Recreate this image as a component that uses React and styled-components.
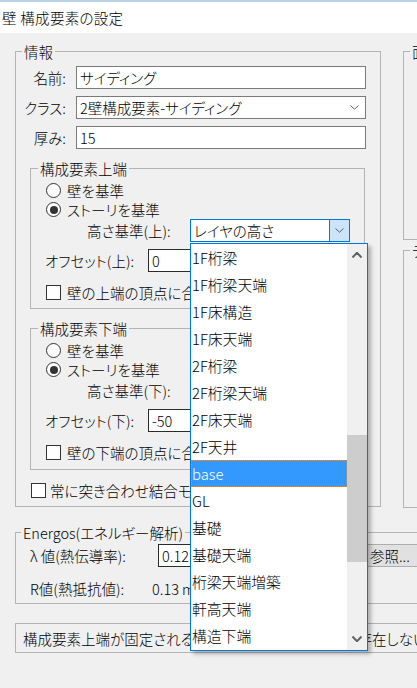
import React from 'react';
import styled, { createGlobalStyle } from 'styled-components';

const GlobalStyle = createGlobalStyle`
  html, body {
    margin: 0;
    padding: 0;
    background: #f0f0f0;
  }
  body {
    font-family: "Noto Sans CJK JP", "Noto Sans", sans-serif;
    font-size: 14.5px;
    font-weight: 300;
    color: #000;
    font-feature-settings: "palt";
  }
  * {
    box-sizing: border-box;
  }
`;

const Window = styled.div`
  position: relative;
  width: 417px;
  height: 688px;
  overflow: hidden;
  background: #f0f0f0;
`;

const TitleStrip = styled.div`
  height: 2px;
  background: #b9d2e8;
`;

const TitleBar = styled.div`
  height: 31px;
  background: #fff;
  display: flex;
  align-items: center;
  padding-left: 2px;
  font-size: 14.5px;
  letter-spacing: 0.3px;
  white-space: pre;
`;

const Body = styled.div`
  width: 640px;
  padding: 18px 0 0 15px;
  display: flex;
  flex-direction: column;
`;

const TopRow = styled.div`
  display: flex;
  gap: 22px;
  align-items: flex-start;
`;

const Group = styled.div`
  position: relative;
  flex-shrink: 0;
  border: 1px solid #b4b4b4;
  width: ${p => p.$w}px;
  height: ${p => p.$h}px;
  margin-top: ${p => p.$mt || 0}px;
  margin-left: ${p => p.$ml || 0}px;
  padding-top: ${p => p.$pt || 0}px;
`;

const Legend = styled.span`
  position: absolute;
  top: -9px;
  left: ${p => p.$left}px;
  padding: 0 2px;
  line-height: 17px;
  background: #f0f0f0;
  white-space: nowrap;
`;

const FieldGrid = styled.div`
  display: grid;
  grid-template-columns: 50px 290px;
  column-gap: 10px;
  row-gap: 7px;
  align-items: center;
`;

const FieldLabel = styled.span`
  justify-self: end;
  white-space: nowrap;
`;

const TextBox = styled.div`
  height: 23px;
  width: ${p => (p.$w ? `${p.$w}px` : 'auto')};
  border: 1px solid ${p => (p.$dark ? '#2b2b2b' : '#7a7a7a')};
  background: #fff;
  display: flex;
  align-items: center;
  padding-left: 3px;
  white-space: nowrap;
  overflow: hidden;
`;

const SelectBox = styled(TextBox)`
  justify-content: space-between;
  padding-right: 6px;
`;

const Chevron = ({ up, color = '#606060', w = 9, h = 5, sw = 1 }) => (
  <svg width={w} height={h} viewBox={`0 0 ${w} ${h}`}>
    <polyline
      points={up ? `0.5,${h - 0.5} ${w / 2},0.8 ${w - 0.5},${h - 0.5}` : `0.5,0.5 ${w / 2},${h - 0.8} ${w - 0.5},0.5`}
      fill="none"
      stroke={color}
      strokeWidth={sw}
    />
  </svg>
);

const OptionRow = styled.div`
  height: 19px;
  display: flex;
  align-items: center;
  gap: ${p => p.$gap || 6}px;
  padding-left: 15px;
  margin-top: ${p => p.$mt || 0}px;
  white-space: nowrap;
`;

const RadioMark = styled.span`
  width: 15px;
  height: 15px;
  border-radius: 50%;
  border: 1px solid #333;
  background: #fff;
  display: flex;
  align-items: center;
  justify-content: center;
  flex-shrink: 0;

  &::after {
    content: '';
    width: 8px;
    height: 8px;
    border-radius: 50%;
    background: ${p => (p.$checked ? '#333' : 'transparent')};
  }
`;

const CheckMark = styled.span`
  width: 15px;
  height: 15px;
  border: 1px solid #333;
  background: #fff;
  flex-shrink: 0;
`;

const LevelRow = styled.div`
  height: 23px;
  display: flex;
  align-items: center;
  padding-left: ${p => p.$pl}px;
  margin-top: ${p => p.$mt || 0}px;
  white-space: nowrap;
`;

const RowLabel = styled.span`
  width: ${p => p.$w}px;
  flex-shrink: 0;
`;

const Combo = styled.div`
  width: 160px;
  height: 23px;
  border: 1px solid #0078d7;
  background: #fff;
  display: flex;
  align-items: stretch;
`;

const ComboText = styled.span`
  flex: 1;
  display: flex;
  align-items: center;
  padding-left: 3px;
`;

const ComboButton = styled.span`
  width: 20px;
  border-left: 1px solid #0078d7;
  background: #cce4f7;
  display: flex;
  align-items: center;
  justify-content: center;
`;

const PushButton = styled.div`
  width: 80px;
  height: 23px;
  margin-left: ${p => p.$ml}px;
  border: 1px solid #adadad;
  background: #e1e1e1;
  display: flex;
  align-items: center;
  padding-left: 3px;
`;

const ValueText = styled.span`
  white-space: nowrap;
`;

const NoteBox = styled.div`
  margin-top: 19px;
  width: 600px;
  height: 30px;
  border: 1px solid #b4b4b4;
  display: flex;
  align-items: center;
  padding-left: 7px;
  white-space: nowrap;
`;

const RightColumn = styled.div`
  display: flex;
  flex-direction: column;
`;

const DropList = styled.div`
  position: absolute;
  left: 190px;
  top: 243px;
  width: 178px;
  height: 408px;
  border: 1px solid #0078d7;
  background: #fff;
  display: flex;
  box-shadow: 3px 3px 4px rgba(0, 0, 0, 0.28);
`;

const ItemList = styled.div`
  flex: 1;
  display: flex;
  flex-direction: column;
`;

const Item = styled.div`
  height: 27px;
  flex-shrink: 0;
  display: flex;
  align-items: center;
  padding-left: 1px;
  font-size: 14.8px;
  white-space: nowrap;
  background: ${p => (p.$selected ? '#3399ff' : 'transparent')};
  color: ${p => (p.$selected ? '#fff' : '#000')};
  outline: ${p => (p.$selected ? '1px dotted #d99050' : 'none')};
  outline-offset: -1px;
`;

const ScrollBar = styled.div`
  width: 20px;
  background: #f0f0f0;
  display: flex;
  flex-direction: column;
`;

const ScrollArrow = styled.div`
  height: 22px;
  display: flex;
  align-items: center;
  justify-content: center;
`;

const ScrollTrack = styled.div`
  flex: 1;
  display: flex;
  flex-direction: column;
`;

const ScrollThumb = styled.div`
  background: #cdcdcd;
  flex-shrink: 0;
`;

const levels = [
  '1F桁梁',
  '1F桁梁天端',
  '1F床構造',
  '1F床天端',
  '2F桁梁',
  '2F桁梁天端',
  '2F床天端',
  '2F天井',
  'base',
  'GL',
  '基礎',
  '基礎天端',
  '桁梁天端増築',
  '軒高天端',
  '構造下端',
];

const EdgeGroup = ({ title, side, offset, mt, h }) => (
  <Group $w={335} $h={h} $ml={14} $mt={mt} $pt={12}>
    <Legend $left={7}>{title}</Legend>
    <OptionRow>
      <RadioMark />
      <span>壁を基準</span>
    </OptionRow>
    <OptionRow>
      <RadioMark $checked />
      <span>ストーリを基準</span>
    </OptionRow>
    <LevelRow $pl={56}>
      <RowLabel $w={103}>高さ基準({side}):</RowLabel>
      <Combo>
        <ComboText>レイヤの高さ</ComboText>
        <ComboButton>
          <Chevron w={9} h={5} />
        </ComboButton>
      </Combo>
    </LevelRow>
    <LevelRow $pl={14} $mt={7}>
      <RowLabel $w={103}>オフセット({side}):</RowLabel>
      <TextBox $w={110} $dark>{offset}</TextBox>
    </LevelRow>
    <OptionRow $mt={11}>
      <CheckMark />
      <span>壁の{side}端の頂点に合わせる</span>
    </OptionRow>
  </Group>
);

export default function App() {
  const trackHeight = 406 - 44;
  const thumbTop = 169;
  const thumbHeight = 127;

  return (
    <Window>
      <GlobalStyle />
      <TitleStrip />
      <TitleBar>壁 構成要素の設定</TitleBar>
      <Body>
        <TopRow>
          <Group $w={366} $h={456} $pt={14}>
            <Legend $left={6}>情報</Legend>
            <FieldGrid>
              <FieldLabel>名前:</FieldLabel>
              <TextBox>サイディング</TextBox>
              <FieldLabel>クラス:</FieldLabel>
              <SelectBox>
                <span>2壁構成要素-サイディング</span>
                <Chevron w={9} h={5} />
              </SelectBox>
              <FieldLabel>厚み:</FieldLabel>
              <TextBox>15</TextBox>
            </FieldGrid>
            <EdgeGroup title="構成要素上端" side="上" offset="0" mt={19} h={141} />
            <EdgeGroup title="構成要素下端" side="下" offset="-50" mt={19} h={142} />
            <OptionRow $mt={11} $gap={4}>
              <CheckMark />
              <span>常に突き合わせ結合モードを使用</span>
            </OptionRow>
          </Group>
          <RightColumn>
            <Group $w={200} $h={189}>
              <Legend $left={6}>面属性</Legend>
            </Group>
            <Group $w={200} $h={258} $mt={10}>
              <Legend $left={6}>テクスチャ</Legend>
            </Group>
          </RightColumn>
        </TopRow>

        <Group $w={600} $h={72} $mt={24} $pt={11}>
          <Legend $left={5}>Energos(エネルギー解析)</Legend>
          <LevelRow $pl={14}>
            <RowLabel $w={128}>λ 値(熱伝導率):</RowLabel>
            <TextBox $w={60} $dark>0.12</TextBox>
            <PushButton $ml={148}>参照...</PushButton>
          </LevelRow>
          <LevelRow $pl={14} $mt={10}>
            <RowLabel $w={122}>R値(熱抵抗値):</RowLabel>
            <ValueText>0.13 m²K/W</ValueText>
          </LevelRow>
        </Group>

        <NoteBox>構成要素上端が固定されるレイヤの高さがこの図面に存在しない</NoteBox>
      </Body>

      <DropList>
        <ItemList>
          {levels.map(name => (
            <Item key={name} $selected={name === 'base'}>
              {name}
            </Item>
          ))}
        </ItemList>
        <ScrollBar>
          <ScrollArrow>
            <Chevron up w={10} h={6} sw={2} color="#606060" />
          </ScrollArrow>
          <ScrollTrack>
            <div style={{ height: thumbTop }} />
            <ScrollThumb style={{ height: Math.min(thumbHeight, trackHeight - thumbTop) }} />
          </ScrollTrack>
          <ScrollArrow>
            <Chevron w={10} h={6} sw={2} color="#606060" />
          </ScrollArrow>
        </ScrollBar>
      </DropList>
    </Window>
  );
}
